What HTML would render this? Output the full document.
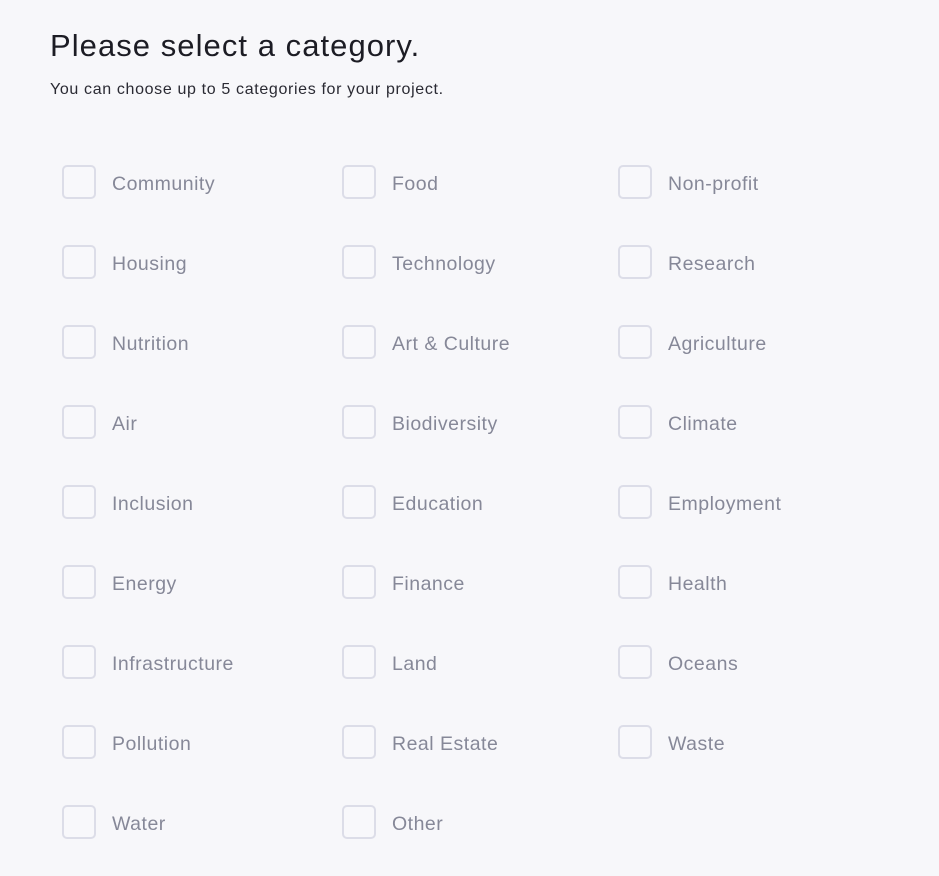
<!DOCTYPE html>
<html><head><style>
body{margin:0;background:#f7f7fa;width:939px;height:876px;overflow:hidden;font-family:"Liberation Sans",sans-serif;position:relative}
h1{position:absolute;left:50px;top:28px;margin:0;font-weight:400;font-size:31px;color:#1c1c24;letter-spacing:1.05px}
p{position:absolute;left:50px;top:81px;margin:0;font-size:16px;color:#2a2a33;letter-spacing:0.65px}
.i{position:absolute;height:34px;display:flex;align-items:center}
.b{width:30px;height:30px;border:2px solid #dcdde8;border-radius:5px;background:#f8f8fb}
.t{margin-left:16px;font-size:19.5px;color:#868898;letter-spacing:0.5px;position:relative;top:2px}
</style></head><body>
<h1>Please select a category.</h1>
<p>You can choose up to 5 categories for your project.</p>
<div id="g"></div>
<script>
var d=[["Community","Food","Non-profit"],["Housing","Technology","Research"],["Nutrition","Art & Culture","Agriculture"],["Air","Biodiversity","Climate"],["Inclusion","Education","Employment"],["Energy","Finance","Health"],["Infrastructure","Land","Oceans"],["Pollution","Real Estate","Waste"],["Water","Other",""]];
var x=[62,342,618],h="";
d.forEach(function(r,i){r.forEach(function(t,j){if(t)h+='<div class="i" style="left:'+x[j]+'px;top:'+(165+80*i)+'px"><div class="b"></div><span class="t">'+t.replace("&","&amp;")+'</span></div>';});});
document.getElementById("g").innerHTML=h;
</script>
</body></html>
